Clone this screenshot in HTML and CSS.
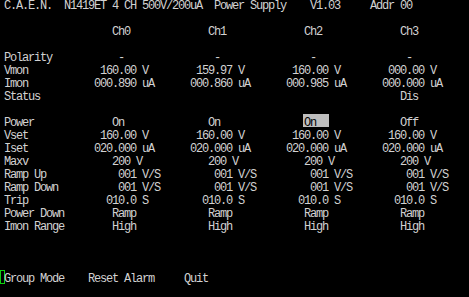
FILE: index.html
```html
<!DOCTYPE html>
<html lang="en">
<head>
    <meta charset="UTF-8">
    <title>C.A.E.N. N1419ET</title>
    <link rel="stylesheet" href="styles.css">
</head>
<body>
<pre class="term">C.A.E.N.  N1419ET 4 CH 500V/200uA  Power Supply    V1.03     Addr 00

                  Ch0             Ch1             Ch2             Ch3

Polarity           -               -               -               -
Vmon            160.00 V        159.97 V        160.00 V        000.00 V
Imon           000.890 uA      000.860 uA      000.985 uA      000.000 uA
Status                                                            Dis

Power             On              On              <span class="sel">On  </span>            Off
Vset            160.00 V        160.00 V        160.00 V        160.00 V
Iset           020.000 uA      020.000 uA      020.000 uA      020.000 uA
Maxv              200 V           200 V           200 V           200 V
Ramp Up            001 V/S         001 V/S         001 V/S         001 V/S
Ramp Down          001 V/S         001 V/S         001 V/S         001 V/S
Trip             010.0 S         010.0 S         010.0 S         010.0 S
Power Down        Ramp            Ramp            Ramp            Ramp
Imon Range        High            High            High            High



<span class="cursor"></span>Group Mode    Reset Alarm     Quit</pre>
</body>
</html>
```

FILE: styles.css
```css
* {
    margin: 0;
    padding: 0;
    box-sizing: border-box;
}

body {
    background: #000;
    width: 469px;
    height: 297px;
    overflow: hidden;
}

.term {
    padding-left: 4px;
    font-family: "Liberation Mono", monospace;
    font-size: 12px;
    letter-spacing: -1.2px;
    line-height: 13px;
    color: #d2d2d2;
}

/* selected field, reverse video */
.sel {
    display: inline-block;
    height: 13px;
    margin: -3px -1px 0;
    padding: 3px 1px 0;
    line-height: 13px;
    background: #bebebe;
    color: #000;
}

.cursor {
    display: inline-block;
    width: 5px;
    height: 14px;
    vertical-align: top;
    margin: -3px -1px 0 -4px;
    border: 1px solid #10d010;
}
```
